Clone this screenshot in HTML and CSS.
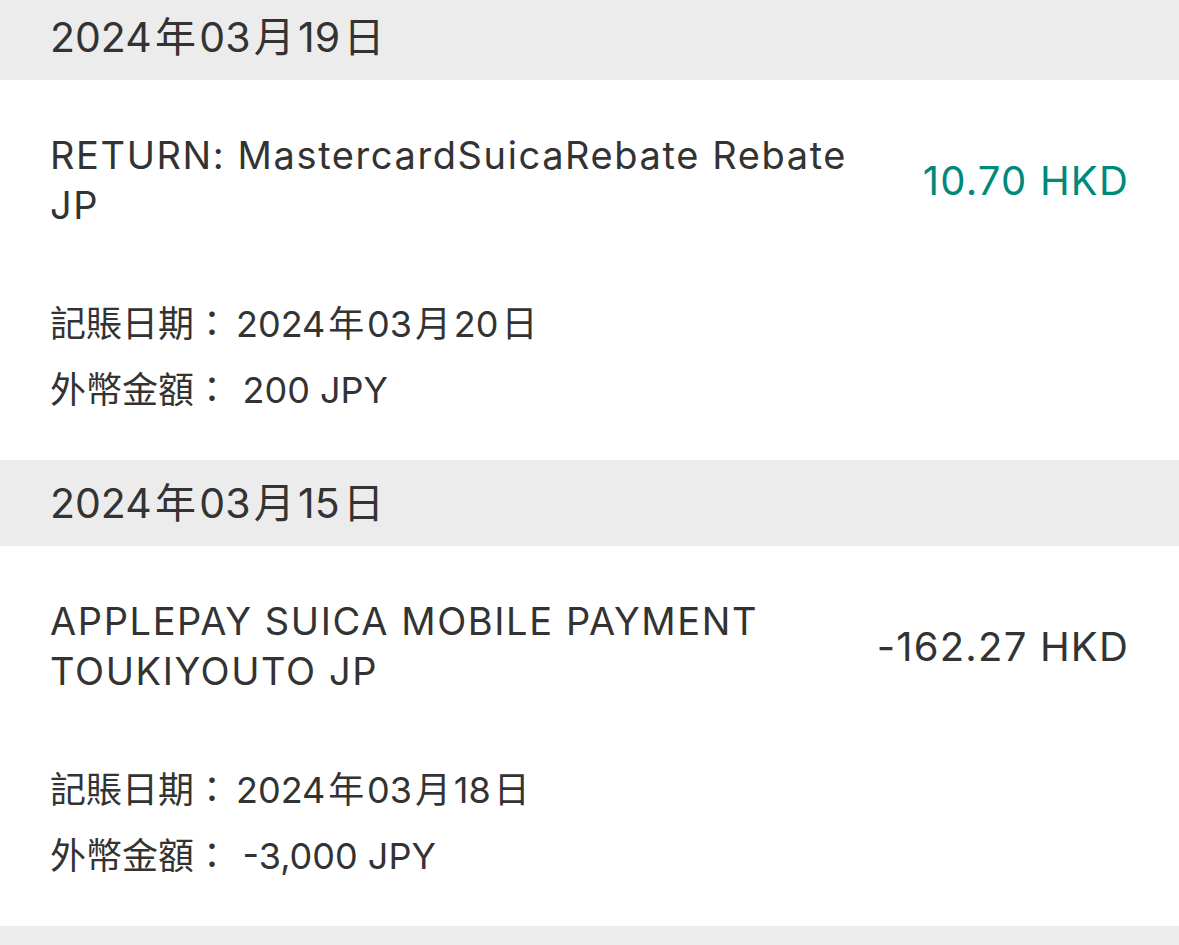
FILE: index.html
```html
<!DOCTYPE html>
<html lang="zh-Hant">
<head>
    <meta charset="UTF-8">
    <meta name="viewport" content="width=device-width, initial-scale=1.0">
    <title>交易紀錄</title>
    <link rel="stylesheet" href="styles.css">
</head>
<body>
    <div class="list">
        <div class="date-header">2024<span class="cjk">年</span>03<span class="cjk">月</span>19<span class="cjk">日</span></div>
        <div class="txn">
            <div class="txn-main">
                <div class="txn-title">RETURN: MastercardSuicaRebate Rebate JP</div>
                <div class="txn-amount credit">10.70 HKD</div>
            </div>
            <div class="txn-meta">
                <div class="meta-row"><span class="meta-label">記賬日期：</span>2024<span class="cjk">年</span>03<span class="cjk">月</span>20<span class="cjk">日</span></div>
                <div class="meta-row"><span class="meta-label">外幣金額：</span>&thinsp;200 JPY</div>
            </div>
        </div>

        <div class="date-header">2024<span class="cjk">年</span>03<span class="cjk">月</span>15<span class="cjk">日</span></div>
        <div class="txn">
            <div class="txn-main">
                <div class="txn-title">APPLEPAY SUICA MOBILE PAYMENT TOUKIYOUTO JP</div>
                <div class="txn-amount">-162.27 HKD</div>
            </div>
            <div class="txn-meta">
                <div class="meta-row"><span class="meta-label">記賬日期：</span>2024<span class="cjk">年</span>03<span class="cjk">月</span>18<span class="cjk">日</span></div>
                <div class="meta-row"><span class="meta-label">外幣金額：</span>&thinsp;-3,000 JPY</div>
            </div>
        </div>

        <!-- next day's header, scrolled below the fold -->
        <div class="date-header"></div>
    </div>
</body>
</html>
```

FILE: styles.css
```css
* {
    margin: 0;
    padding: 0;
    box-sizing: border-box;
}

body {
    background: #ffffff;
    color: #333333;
    font-family: Inter, "Noto Sans CJK TC", sans-serif;
    overflow: hidden;
}

.list {
    margin-top: -6px;
}

.cjk {
    margin: 0 0.08em;
}

.date-header {
    background: #ececec;
    height: 86px;
    line-height: 86px;
    padding: 0 50px;
    font-size: 41px;
}

.txn {
    padding: 50px 50px 37px 50px;
}

.txn-main {
    display: flex;
    align-items: center;
    justify-content: space-between;
}

.txn-title {
    flex: 0 1 830px;
    font-size: 38px;
    line-height: 50px;
    letter-spacing: 1.6px;
}

.txn-amount {
    font-size: 40px;
    letter-spacing: 1.2px;
    white-space: nowrap;
}

.txn-amount.credit {
    color: #00897b;
}

.txn-meta {
    margin-top: 61px;
    font-size: 36px;
}

.meta-row {
    line-height: 66px;
}

.meta-label {
    margin-right: 6px;
}
```
